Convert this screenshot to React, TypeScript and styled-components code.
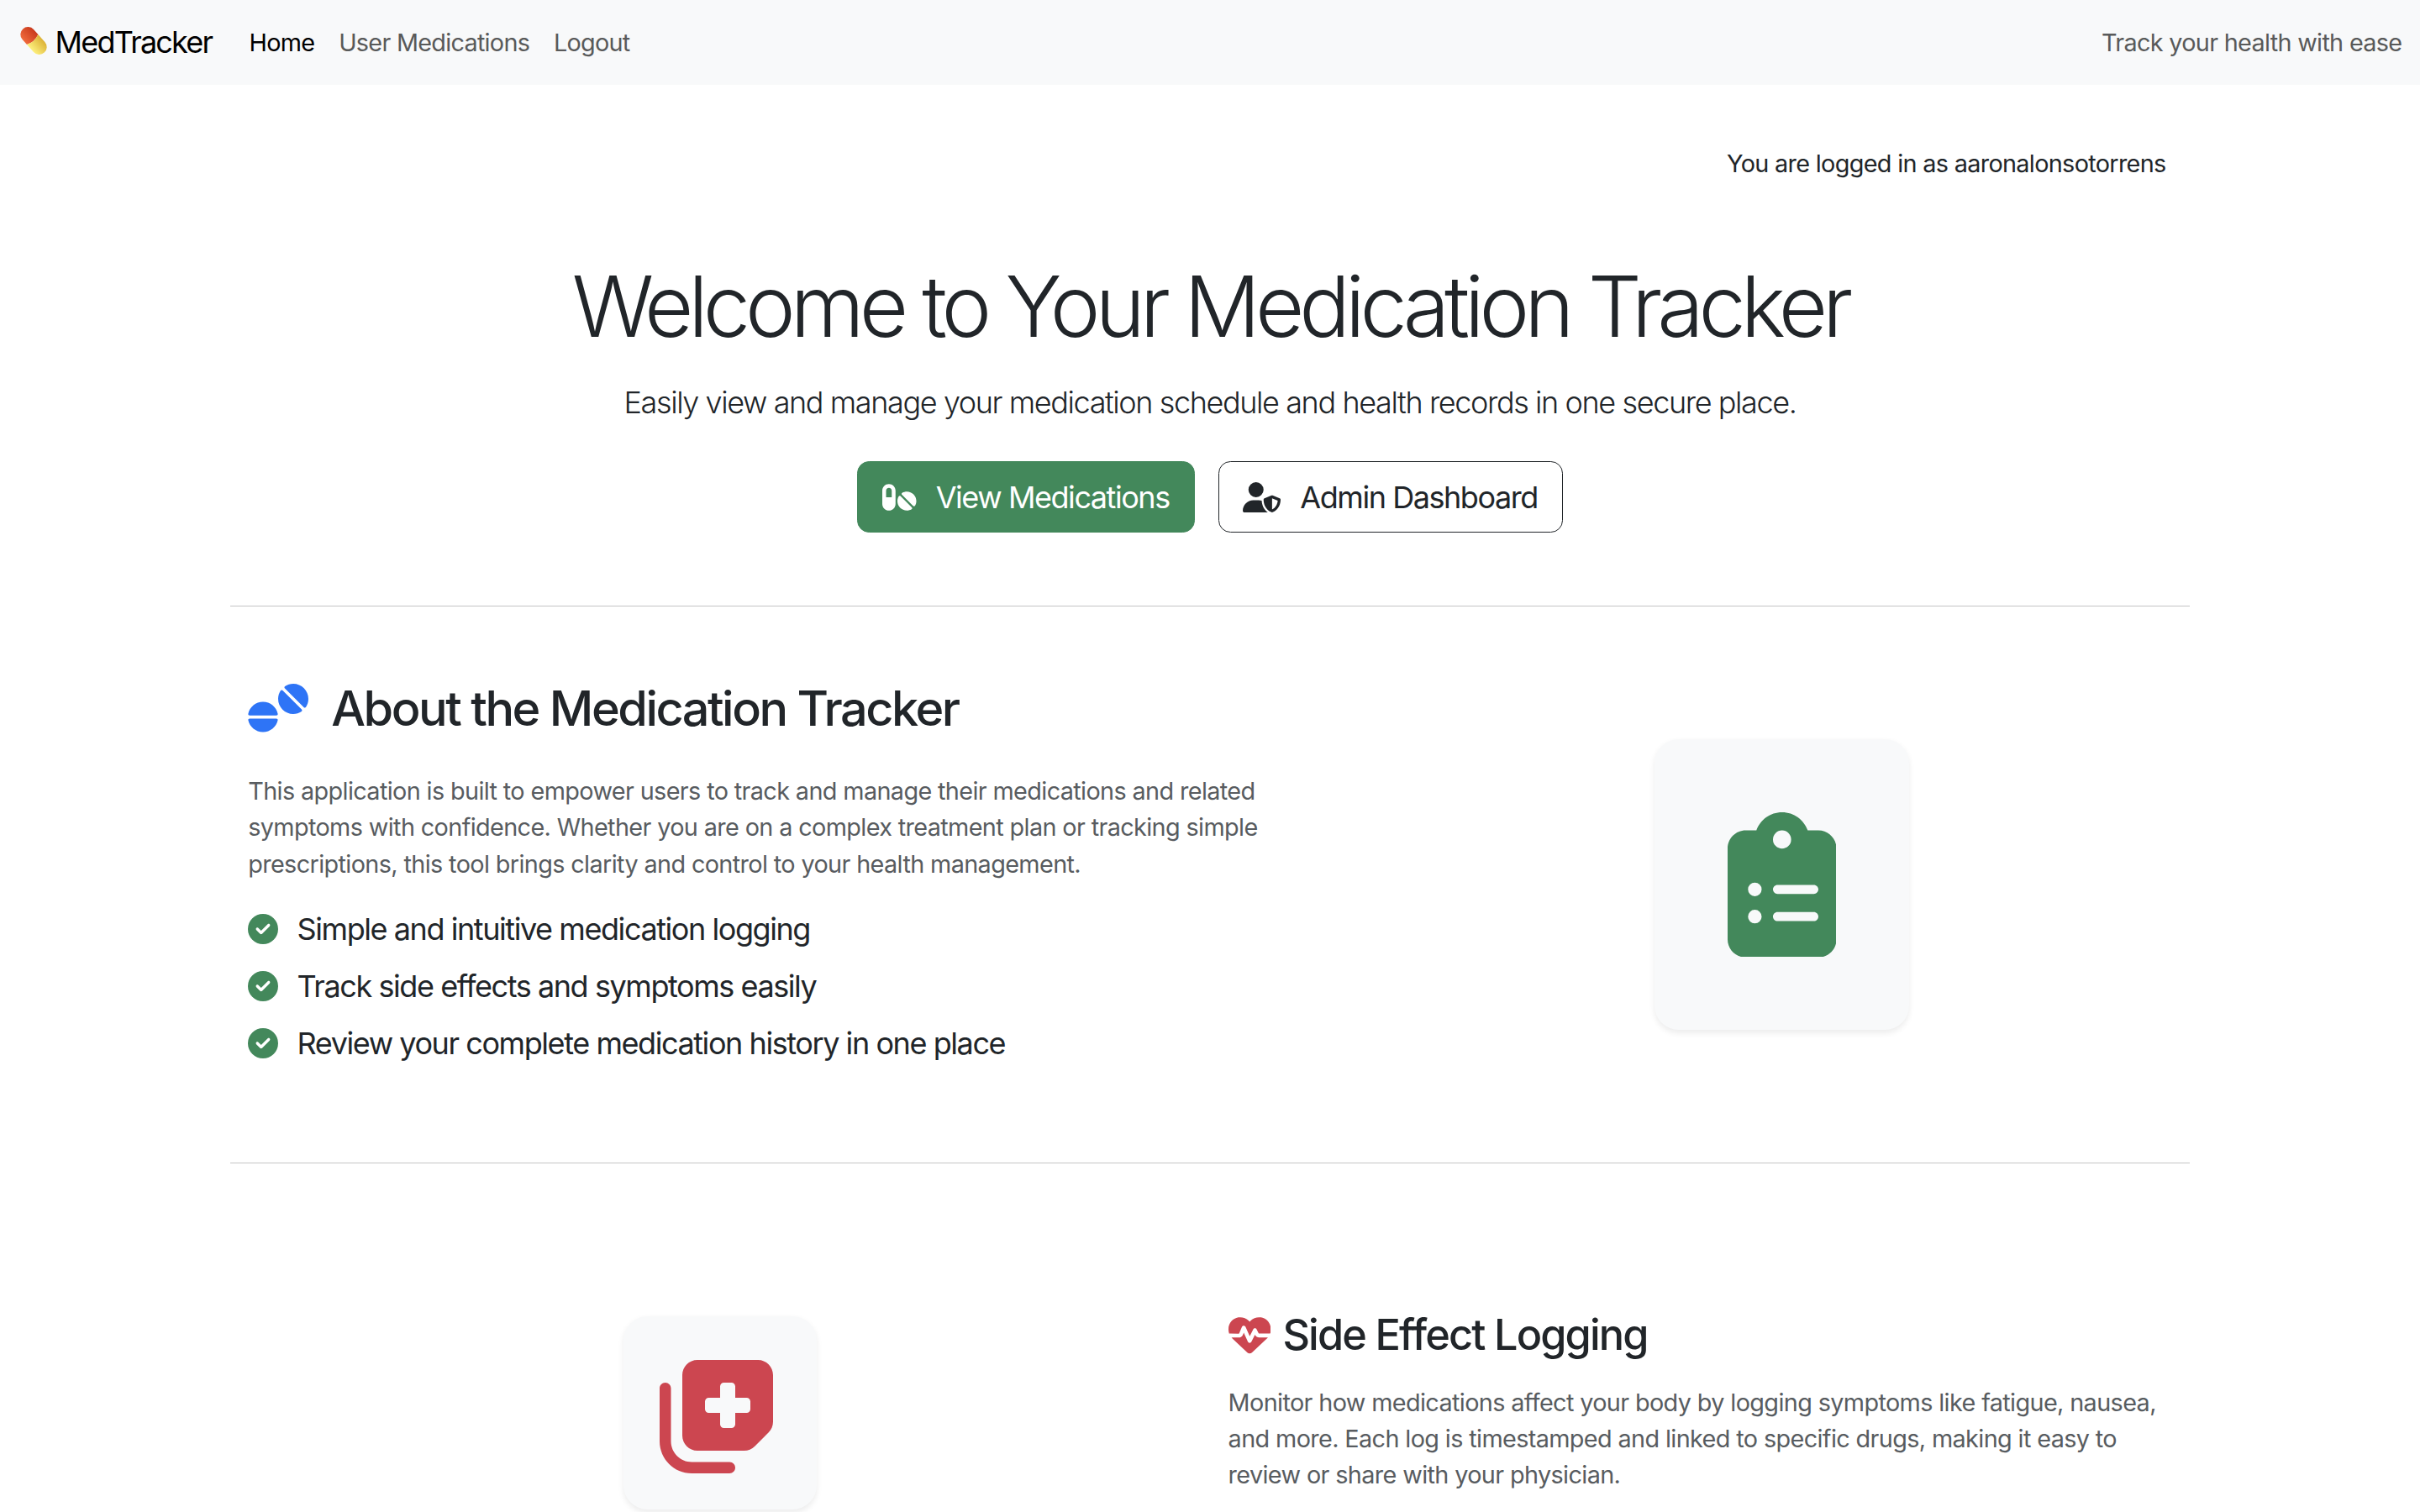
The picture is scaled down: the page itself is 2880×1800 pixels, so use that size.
import React from "react";
import styled, { createGlobalStyle } from "styled-components";
import {
  FaPills,
  FaUserShield,
  FaTablets,
  FaClipboardList,
  FaNotesMedical,
  FaHeartPulse,
  FaCircleCheck,
} from "react-icons/fa6";

const GREEN = "#43885b";
const RED = "#cc4650";
const BLUE = "#2e74f6";

const Global = createGlobalStyle`
  html, body { margin: 0; padding: 0; height: 100%; overflow: hidden; background: #fff; }
  body {
    font-family: Inter, "Liberation Sans", sans-serif;
    font-size: 28.8px;
    line-height: 1.5;
    color: #212529;
    letter-spacing: -0.62px;
    -webkit-font-smoothing: antialiased;
  }
  * { box-sizing: border-box; }
`;

const Navbar = styled.nav`
  height: 100.8px;
  background: #f8f9fa;
  padding: 0 21.6px;
  display: flex;
  align-items: center;
`;

const Brand = styled.a`
  display: flex;
  align-items: center;
  gap: 8px;
  font-size: 36px;
  color: #000;
  letter-spacing: -1.8px;
  margin-right: 30px;
`;

const NavLinks = styled.div`
  display: flex;
  flex: 1;
`;

const NavLink = styled.a<{ $active?: boolean }>`
  padding: 0 14.4px;
  letter-spacing: -0.72px;
  color: ${(p) => (p.$active ? "#000" : "#595a5a")};
`;

const Tagline = styled.span`
  color: #595a5a;
  letter-spacing: -0.68px;
`;

const Container = styled.main`
  width: 2376px;
  margin: 0 auto;
  padding: 0 21.6px;
`;

const LoginNote = styled.p`
  margin: 72px 0 0;
  padding-right: 28.8px;
  text-align: right;
  letter-spacing: -0.67px;
`;

const Hero = styled.header`
  padding-top: 88px;
  text-align: center;
`;

const Title = styled.h1`
  margin: 0 0 27.2px;
  font-size: 100.8px;
  font-weight: 300;
  line-height: 1.2;
  letter-spacing: -6.06px;
`;

const Lead = styled.p`
  margin: 0 0 43.2px;
  font-size: 36px;
  font-weight: 300;
  letter-spacing: -1.4px;
`;

const Actions = styled.div`
  display: flex;
  justify-content: center;
  gap: 28px;
`;

const Button = styled.a<{ $solid?: boolean }>`
  display: flex;
  align-items: center;
  gap: 23px;
  height: 84.8px;
  padding: 0 28.8px;
  font-size: 36px;
  border-radius: 14.4px;
  letter-spacing: -1.45px;
  border: 1px solid ${(p) => (p.$solid ? GREEN : "#212529")};
  background: ${(p) => (p.$solid ? GREEN : "#fff")};
  color: ${(p) => (p.$solid ? "#fff" : "#212529")};
`;

const PillsIcon = styled(FaPills)`
  width: 40.5px;
  height: 36px;
`;

const ShieldIcon = styled(FaUserShield)`
  width: 45px;
  height: 36px;
`;

const Rule = styled.hr`
  height: 1px;
  margin: 86.4px 0;
  border: 0;
  background: #c4c4c5;
`;

const Row = styled.section<{ $cols: string; $pad?: boolean }>`
  display: grid;
  grid-template-columns: ${(p) => p.$cols};
  align-items: center;
  padding: ${(p) => (p.$pad ? "86.4px 0" : "0")};
`;

const TextCol = styled.div`
  padding: 0 21.6px;
`;

const MediaCol = styled.div`
  display: flex;
  justify-content: center;
`;

const Heading = styled.h2`
  display: flex;
  align-items: center;
  gap: 27px;
  margin: 0 0 43.2px;
  padding-top: 1.5px;
  height: 69.1px;
  font-size: 57.6px;
  font-weight: 500;
  line-height: 1.2;
  letter-spacing: -2.47px;
`;

const TabletsIcon = styled(FaTablets)`
  width: 72px;
  height: 57.6px;
  color: ${BLUE};
`;

const SubHeading = styled.h3`
  display: flex;
  align-items: center;
  gap: 14.4px;
  margin: 0 0 28.8px;
  padding-top: 2px;
  height: 60.5px;
  font-size: 50.4px;
  font-weight: 500;
  line-height: 1.2;
  letter-spacing: -1.86px;
`;

const Muted = styled.p`
  margin: 0 0 28.8px;
  color: #585c60;
  letter-spacing: -0.62px;
`;

const Checks = styled.ul`
  list-style: none;
  margin: 0;
  padding: 0 0 14.4px;
`;

const Check = styled.li`
  display: flex;
  align-items: center;
  gap: 22.4px;
  margin-bottom: 14.4px;
  font-size: 36px;
  letter-spacing: -1.43px;
`;

const IconCard = styled.div<{ $pad: number }>`
  display: flex;
  padding: ${(p) => p.$pad}px;
  background: #f8f9fa;
  border-radius: 28.8px;
  box-shadow: 0 3.6px 7.2px rgba(0, 0, 0, 0.075);
`;

const ClipboardIcon = styled(FaClipboardList)`
  width: 129.6px;
  height: 172.8px;
  color: ${GREEN};
`;

const PillLogo = () => (
  <svg width="36" height="36" viewBox="0 1.5 36 36" overflow="visible" aria-hidden="true">
    <defs>
      <linearGradient id="pillRed" x1="0" y1="0" x2="1" y2="0">
        <stop offset="0" stopColor="#f06a3c" />
        <stop offset="1" stopColor="#c93a1c" />
      </linearGradient>
      <linearGradient id="pillYellow" x1="0" y1="0" x2="1" y2="0">
        <stop offset="0" stopColor="#fdf07e" />
        <stop offset="1" stopColor="#dcb236" />
      </linearGradient>
    </defs>
    <g transform="rotate(-42 18 18)">
      <path d="M9 16V8a9 9 0 0 1 18 0V16Q18 20 9 16Z" fill="url(#pillRed)" />
      <path d="M9 16Q18 20 27 16V28a9 9 0 0 1-18 0Z" fill="url(#pillYellow)" />
    </g>
  </svg>
);

export default function App() {
  return (
    <>
      <Global />
      <Navbar>
        <Brand>
          <PillLogo />
          MedTracker
        </Brand>
        <NavLinks>
          <NavLink $active>Home</NavLink>
          <NavLink>User Medications</NavLink>
          <NavLink>Logout</NavLink>
        </NavLinks>
        <Tagline>Track your health with ease</Tagline>
      </Navbar>
      <Container>
        <LoginNote>You are logged in as aaronalonsotorrens</LoginNote>
        <Hero>
          <Title>Welcome to Your Medication Tracker</Title>
          <Lead>Easily view and manage your medication schedule and health records in one secure place.</Lead>
          <Actions>
            <Button $solid>
              <PillsIcon />
              View Medications
            </Button>
            <Button>
              <ShieldIcon />
              Admin Dashboard
            </Button>
          </Actions>
        </Hero>
        <Rule />
        <Row $cols="7fr 5fr">
          <TextCol>
            <Heading>
              <TabletsIcon />
              About the Medication Tracker
            </Heading>
            <Muted>
              This application is built to empower users to track and manage their medications and related symptoms
              with confidence. Whether you are on a complex treatment plan or tracking simple prescriptions, this tool
              brings clarity and control to your health management.
            </Muted>
            <Checks>
              {[
                "Simple and intuitive medication logging",
                "Track side effects and symptoms easily",
                "Review your complete medication history in one place",
              ].map((t) => (
                <Check key={t}>
                  <FaCircleCheck size={36} color={GREEN} />
                  {t}
                </Check>
              ))}
            </Checks>
          </TextCol>
          <MediaCol>
            <IconCard $pad={86.4}>
              <ClipboardIcon />
            </IconCard>
          </MediaCol>
        </Row>
        <Rule />
        <Row $cols="1fr 1fr" $pad>
          <MediaCol>
            <IconCard $pad={43.2}>
              <FaNotesMedical size={144} color={RED} />
            </IconCard>
          </MediaCol>
          <TextCol>
            <SubHeading>
              <FaHeartPulse size={50.4} color={RED} />
              Side Effect Logging
            </SubHeading>
            <Muted>
              Monitor how medications affect your body by logging symptoms like fatigue, nausea, and more. Each log is
              timestamped and linked to specific drugs, making it easy to review or share with your physician.
            </Muted>
          </TextCol>
        </Row>
      </Container>
    </>
  );
}
